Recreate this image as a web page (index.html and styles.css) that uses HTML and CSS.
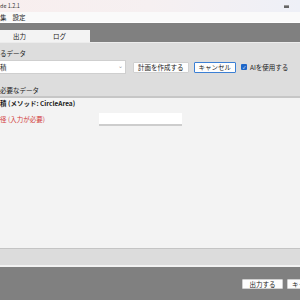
FILE: index.html
```html
<!DOCTYPE html>
<html lang="ja">
<head>
  <meta charset="UTF-8" />
  <title>de 1.2.1</title>
  <link rel="stylesheet" href="styles.css">
</head>
<body>
  <div class="window">
    <div class="titlebar">
      <span class="title">de 1.2.1</span>
      <span class="winbtn"></span>
    </div>

    <div class="menubar">
      <span class="menu">集</span>
      <span class="menu">設定</span>
    </div>

    <div class="tabbar">
      <div class="tabs">
        <span class="tab">出力</span>
        <span class="tab">ログ</span>
      </div>
    </div>

    <div class="toppanel">
      <div class="label">るデータ</div>
      <div class="row">
        <div class="combo">
          <span class="combo-text">積</span>
          <span class="combo-arrow">⌄</span>
        </div>
        <button class="btn">計画を作成する</button>
        <button class="btn focus">キャンセル</button>
        <label class="check"><span class="box">✓</span>AIを使用する</label>
      </div>
      <div class="label next">必要なデータ</div>
    </div>

    <div class="params">
      <div class="method">積 (メソッド: CircleArea)</div>
      <div class="param-row">
        <span class="req">径 (入力が必要)</span>
        <div class="entry"></div>
      </div>
    </div>

    <div class="status"></div>

    <div class="footer">
      <button class="btn">出力する</button>
      <button class="btn last">キャンセル</button>
    </div>
  </div>
</body>
</html>
```

FILE: styles.css
```css
* {
  box-sizing: border-box;
  margin: 0;
  padding: 0;
}

body {
  background: #808080;
}

.window {
  width: 300px;
  height: 300px;
  overflow: hidden;
  display: flex;
  flex-direction: column;
  font-family: "Noto Sans CJK JP", "DejaVu Sans", sans-serif;
  font-size: 6.5px;
  color: #1a1a1a;
}

.titlebar {
  height: 12px;
  display: flex;
  align-items: center;
  background: linear-gradient(90deg, #f8eeee, #f6f0f1 50%, #eef0f7);
}

.title {
  font-size: 5.5px;
  color: #333;
}

.winbtn {
  margin-left: auto;
  margin-right: 11px;
  width: 5px;
  height: 3px;
  background: #666;
  border-top: 1px solid #999;
}

.menubar {
  height: 11px;
  display: flex;
  align-items: center;
  gap: 6px;
  background: #fafafa;
  border-bottom: 1px solid #fff;
}

.tabbar {
  height: 19px;
  background: #808080;
  display: flex;
  align-items: flex-end;
}

.tabs {
  width: 90px;
  height: 12px;
  display: flex;
  background: #f3f3f3;
}

.tab {
  width: 40px;
  display: flex;
  align-items: center;
  padding-left: 13px;
}

.toppanel {
  height: 54px;
  background: #dddddd;
  border-top: 1px solid #ececec;
  padding-top: 6px;
}

.label {
  line-height: 9px;
  white-space: nowrap;
}

.label.next {
  margin-top: 12px;
}

.row {
  margin-top: 2px;
  height: 14px;
  display: flex;
  align-items: center;
}

.combo {
  width: 126px;
  height: 14px;
  background: #fff;
  border: 1px solid #cfcfcf;
  border-left: none;
  display: flex;
  align-items: center;
}

.combo-arrow {
  margin-left: auto;
  margin-right: 2px;
  margin-top: -3px;
  color: #9a9a9a;
  font-size: 6px;
}

.btn {
  font-family: inherit;
  font-size: 6.5px;
  height: 11px;
  line-height: 9px;
  padding: 0 4px;
  background: #fdfdfd;
  border: 1px solid #d0d0d0;
  border-radius: 1px;
  color: #1a1a1a;
  white-space: nowrap;
}

.row .btn {
  margin-left: 7px;
}

.row .btn.focus {
  margin-left: 5px;
  border-color: #3b7fd4;
}

.check {
  margin-left: 5px;
  display: flex;
  align-items: center;
  gap: 3px;
  white-space: nowrap;
}

.box {
  width: 6px;
  height: 6px;
  background: #1d66c9;
  border-radius: 1px;
  color: #fff;
  font-size: 4px;
  line-height: 6px;
  text-align: center;
}

.params {
  flex: 1;
  background: #f3f3f3;
  border-top: 2px solid #c6c6c6;
  padding-top: 1px;
}

.method {
  font-weight: bold;
  line-height: 9px;
  white-space: nowrap;
}

.param-row {
  margin-top: 5px;
  display: flex;
  align-items: center;
}

.req {
  width: 99px;
  color: #d23a3a;
  white-space: nowrap;
  margin-top: -2px;
}

.entry {
  width: 83px;
  height: 13px;
  background: #fff;
  border-bottom: 2px solid #cdcdcd;
}

.status {
  height: 19px;
  background: #dcdcdc;
  border-top: 1px solid #c4c4c4;
  border-bottom: 2px solid #f2f2f2;
}

.footer {
  height: 33px;
  background: #808080;
  display: flex;
  justify-content: flex-end;
  align-items: flex-start;
  gap: 4px;
  padding-top: 12px;
}

.footer .btn {
  width: 41px;
  height: 10px;
  line-height: 8px;
  flex-shrink: 0;
}

.footer .btn.last {
  margin-right: -28px;
}
```
